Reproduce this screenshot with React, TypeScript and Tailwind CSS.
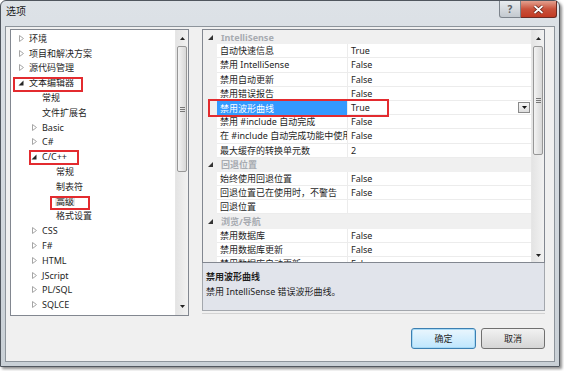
import React from 'react';

const FONT = { fontFamily: '"Noto Sans", "Noto Sans CJK SC", sans-serif' };

type TreeItem = { label: string; level: 0 | 1 | 2; arrow: 'closed' | 'open' | 'none'; selected?: boolean };

const treeItems: TreeItem[] = [
  { label: '环境', level: 0, arrow: 'closed' },
  { label: '项目和解决方案', level: 0, arrow: 'closed' },
  { label: '源代码管理', level: 0, arrow: 'closed' },
  { label: '文本编辑器', level: 0, arrow: 'open' },
  { label: '常规', level: 1, arrow: 'none' },
  { label: '文件扩展名', level: 1, arrow: 'none' },
  { label: 'Basic', level: 1, arrow: 'closed' },
  { label: 'C#', level: 1, arrow: 'closed' },
  { label: 'C/C++', level: 1, arrow: 'open' },
  { label: '常规', level: 2, arrow: 'none' },
  { label: '制表符', level: 2, arrow: 'none' },
  { label: '高级', level: 2, arrow: 'none', selected: true },
  { label: '格式设置', level: 2, arrow: 'none' },
  { label: 'CSS', level: 1, arrow: 'closed' },
  { label: 'F#', level: 1, arrow: 'closed' },
  { label: 'HTML', level: 1, arrow: 'closed' },
  { label: 'JScript', level: 1, arrow: 'closed' },
  { label: 'PL/SQL', level: 1, arrow: 'closed' },
  { label: 'SQLCE', level: 1, arrow: 'closed' },
];

type GridRow = { kind: 'cat'; label: string } | { kind: 'row'; name: string; value: string; selected?: boolean };

const gridRows: GridRow[] = [
  { kind: 'cat', label: 'IntelliSense' },
  { kind: 'row', name: '自动快速信息', value: 'True' },
  { kind: 'row', name: '禁用 IntelliSense', value: 'False' },
  { kind: 'row', name: '禁用自动更新', value: 'False' },
  { kind: 'row', name: '禁用错误报告', value: 'False' },
  { kind: 'row', name: '禁用波形曲线', value: 'True', selected: true },
  { kind: 'row', name: '禁用 #include 自动完成', value: 'False' },
  { kind: 'row', name: '在 #include 自动完成功能中使用正斜杠', value: 'False' },
  { kind: 'row', name: '最大缓存的转换单元数', value: '2' },
  { kind: 'cat', label: '回退位置' },
  { kind: 'row', name: '始终使用回退位置', value: 'False' },
  { kind: 'row', name: '回退位置已在使用时，不警告', value: 'False' },
  { kind: 'row', name: '回退位置', value: '' },
  { kind: 'cat', label: '浏览/导航' },
  { kind: 'row', name: '禁用数据库', value: 'False' },
  { kind: 'row', name: '禁用数据库更新', value: 'False' },
  { kind: 'row', name: '禁用数据库自动更新', value: 'False' },
];

const levelPad = { 0: 'pl-[7px]', 1: 'pl-[20px]', 2: 'pl-[34px]' };

const Arrow = ({ type }: { type: 'closed' | 'open' | 'none' }) => {
  if (type === 'closed')
    return (
      <svg width="5" height="7" viewBox="0 0 5 7" className="ml-[1px]">
        <path d="M0.5 0.5 L4.5 3.5 L0.5 6.5 Z" fill="#fff" stroke="#a6a6a6" strokeWidth="1" />
      </svg>
    );
  if (type === 'open')
    return (
      <svg width="6" height="6" viewBox="0 0 6 6">
        <path d="M5.5 0.5 L5.5 5.5 L0.5 5.5 Z" fill="#262626" />
      </svg>
    );
  return null;
};

const ScrollArrow = ({ up }: { up?: boolean }) => (
  <svg width="5" height="3" viewBox="0 0 5 3">
    <path d={up ? 'M0 3 L2.5 0 L5 3 Z' : 'M0 0 L5 0 L2.5 3 Z'} fill="#222" />
  </svg>
);

const Thumb = ({ className }: { className: string }) => (
  <div
    className={`${className} mx-[1px] flex flex-col items-center justify-center gap-[1px] rounded-[2px] border border-[#979797] bg-gradient-to-r from-[#f3f3f3] to-[#d8d8d8]`}
  >
    <div className="h-px w-[5px] bg-[#777]" />
    <div className="h-px w-[5px] bg-[#777]" />
    <div className="h-px w-[5px] bg-[#777]" />
  </div>
);

const TreePanel = () => (
  <div className="relative flex h-[287px] w-[179px] border border-[#828790] bg-white">
    <div className="flex-1 overflow-hidden pt-[1px]">
      {treeItems.map((item, i) => (
        <div key={i} className={`flex h-[14.8px] items-center ${levelPad[item.level]}`}>
          <div className="flex w-[11px] items-center">
            <Arrow type={item.arrow} />
          </div>
          <span className={`text-[9px] leading-none text-[#1e1e1e] ${item.selected ? 'bg-[#e6e6e6] px-[1px] -ml-[1px]' : ''}`}>
            {item.label}
          </span>
        </div>
      ))}
    </div>
    <div className="flex w-[13px] flex-col border-l border-[#e6e6e6] bg-gradient-to-r from-[#e4e4e4] to-[#f2f2f2]">
      <div className="flex h-[16px] items-center justify-center">
        <ScrollArrow up />
      </div>
      <Thumb className="h-[126px]" />
      <div className="flex-1" />
      <div className="flex h-[18px] items-center justify-center">
        <ScrollArrow />
      </div>
    </div>
    {/* annotation boxes */}
    <div className="absolute left-[2px] top-[47px] h-[15px] w-[70px] border-2 border-[#e32b2f]" />
    <div className="absolute left-[18px] top-[120px] h-[15px] w-[50px] border-2 border-[#e32b2f]" />
    <div className="absolute left-[39px] top-[166px] h-[14px] w-[40px] border-2 border-[#e32b2f]" />
  </div>
);

const PropertyGrid = () => (
  <div className="relative flex h-[234px] border border-[#828790] bg-white">
    <div className="flex-1 overflow-hidden">
      {gridRows.map((row, i) =>
        row.kind === 'cat' ? (
          <div key={i} className="flex h-[14.2px] items-center bg-[#f0f0f0]">
            <div className="flex w-[14px] items-center justify-center">
              <svg width="5" height="5" viewBox="0 0 5 5">
                <path d="M5 0 L5 5 L0 5 Z" fill="#333" />
              </svg>
            </div>
            <span className="pl-[4px] text-[9px] font-bold leading-none text-[#a7abb1]">{row.label}</span>
          </div>
        ) : (
          <div key={i} className="flex h-[14.2px]">
            <div className="w-[14px] bg-[#f0f0f0]" />
            <div
              className={`flex w-[131px] items-center overflow-hidden whitespace-nowrap border-r border-[#ececec] pl-[3px] text-[9px] leading-none ${
                row.selected ? 'bg-[#3399ff] text-white' : 'border-b text-[#1e1e1e]'
              }`}
            >
              {row.name}
            </div>
            <div className="flex flex-1 items-center justify-between border-b border-[#ececec] pl-[3px] text-[9px] leading-none text-[#1e1e1e]">
              <span>{row.value}</span>
              {row.selected && (
                <div className="mr-[1px] flex h-[11px] w-[12px] items-center justify-center border border-[#8a8a8a] bg-gradient-to-b from-[#f6f6f6] to-[#dedede]">
                  <svg width="5" height="3" viewBox="0 0 5 3">
                    <path d="M0 0 L5 0 L2.5 3 Z" fill="#111" />
                  </svg>
                </div>
              )}
            </div>
          </div>
        ),
      )}
    </div>
    <div className="flex w-[13px] flex-col border-l border-[#e6e6e6] bg-gradient-to-r from-[#e4e4e4] to-[#f2f2f2]">
      <div className="flex h-[16px] items-center justify-center">
        <ScrollArrow up />
      </div>
      <Thumb className="h-[109px]" />
      <div className="flex-1" />
      <div className="flex h-[14px] items-center justify-center">
        <ScrollArrow />
      </div>
    </div>
    <div className="absolute left-[5px] top-[69px] h-[18px] w-[181px] border-2 border-[#e32b2f]" />
  </div>
);

export default function App() {
  return (
    <div className="h-[371px] w-[564px] overflow-hidden bg-white" style={FONT}>
      <div className="flex h-[367px] w-[560px] flex-col rounded-t-[6px] border border-[#50565e] bg-gradient-to-b from-[#dde2e7] to-[#c9d0d6] shadow-[2px_2px_3px_rgba(0,0,0,0.45)]">
        {/* title bar */}
        <div className="flex h-[25px] items-start justify-between">
          <span className="pl-[5px] pt-[5px] text-[10px] leading-none text-[#1a1a1a]">选项</span>
          <div className="mr-[2px] flex">
            <div className="flex h-[17px] w-[22px] items-center justify-center rounded-bl-[3px] border border-t-0 border-[#7d848c] bg-gradient-to-b from-[#e9ecef] to-[#c3c9cf] text-[10px] font-bold leading-none text-[#5b6066]">
              ?
            </div>
            <div className="flex h-[17px] w-[36px] items-center justify-center rounded-br-[3px] border border-l-0 border-t-0 border-[#6b2a22] bg-gradient-to-b from-[#e3a08f] via-[#c9523c] to-[#c23a23]">
              <svg width="11" height="9" viewBox="0 0 11 9">
                <path d="M1.5 1 L9.5 8 M9.5 1 L1.5 8" stroke="#5a1a10" strokeWidth="3.2" />
                <path d="M1.5 1 L9.5 8 M9.5 1 L1.5 8" stroke="#fff" strokeWidth="1.8" />
              </svg>
            </div>
          </div>
        </div>
        {/* client area */}
        <div className="mx-[4px] mb-[4px] flex flex-1 border border-[#8d949b] bg-[#f0f0f0] pl-[4px] pt-[2px]">
          <TreePanel />
          <div className="ml-[13px] flex w-[343px] flex-col">
            <PropertyGrid />
            <div className="h-[48px] border border-t-0 border-[#a3a7ad] bg-[#e1e4eb] px-[3px] pt-[6px] text-[9px] leading-[15px] text-[#1e1e1e]">
              <div className="font-bold">禁用波形曲线</div>
              <div>禁用 IntelliSense 错误波形曲线。</div>
            </div>
            <div className="mt-[2px] h-px bg-[#d3d3d3]" />
            <div className="mt-[14px] flex justify-end gap-[5px]">
              <button className="h-[21px] w-[65px] rounded-[3px] border border-[#3c7fb1] bg-gradient-to-b from-[#eaf6fd] to-[#bee6fd] text-[9px] leading-none text-[#1e1e1e] shadow-[inset_0_0_0_1px_#a7d9f5]">
                确定
              </button>
              <button className="h-[21px] w-[64px] rounded-[3px] border border-[#707070] bg-gradient-to-b from-[#f2f2f2] to-[#d5d5d5] text-[9px] leading-none text-[#1e1e1e]">
                取消
              </button>
            </div>
          </div>
        </div>
      </div>
    </div>
  );
}
